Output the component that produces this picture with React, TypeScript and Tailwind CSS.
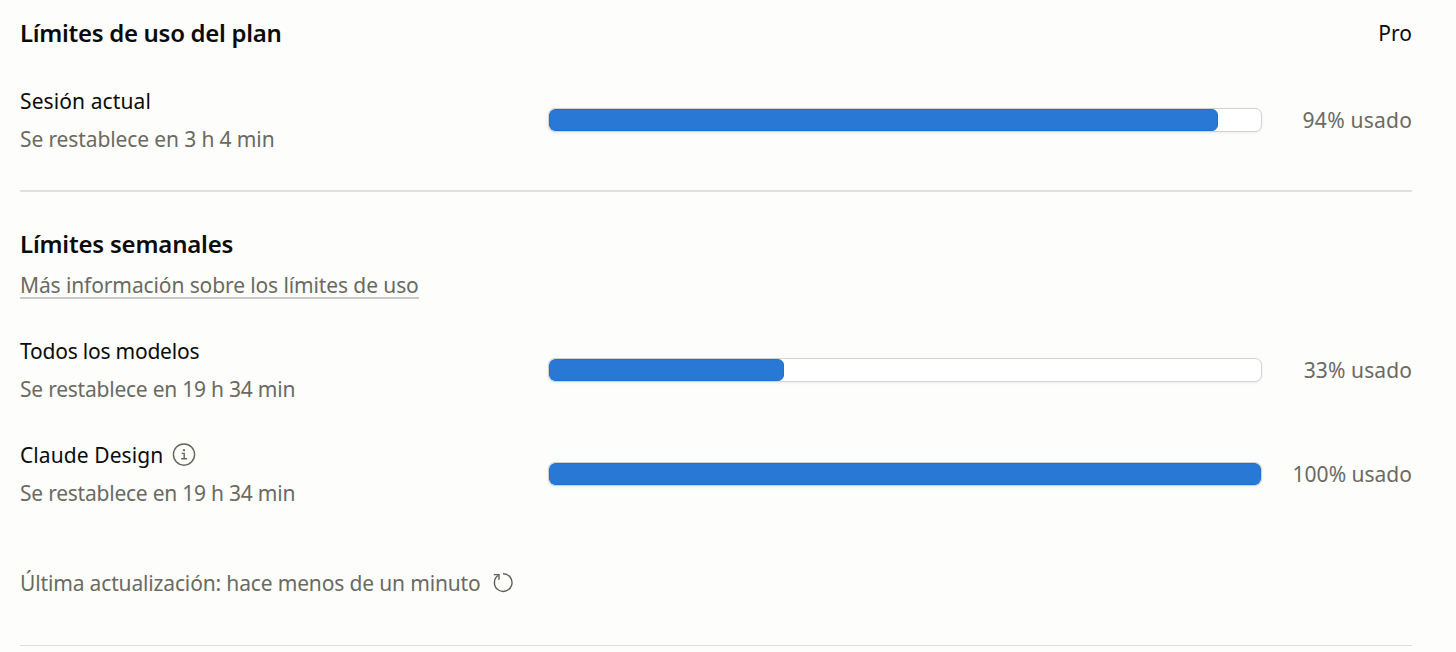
import React from "react";

function InfoIcon() {
  return (
    <svg className="h-6 w-6 shrink-0 text-[#65655f]" viewBox="0 0 24 24" fill="none" stroke="currentColor" strokeWidth="1.4">
      <circle cx="12" cy="11.6" r="10.6" />
      <path d="M9.6 10.4h2.6v5.2M9.2 15.7h6" />
      <circle cx="12" cy="7.2" r="1.1" fill="currentColor" stroke="none" />
    </svg>
  );
}

function RefreshIcon() {
  return (
    <svg className="h-6 w-6 shrink-0 text-[#5f5f5a]" viewBox="0 0 24 24" fill="none" stroke="currentColor" strokeWidth="1.4">
      <path d="M12 2.8A8.8 8.8 0 1 1 7 4.5" />
      <path d="M2.8 3.6H8v5.2" />
    </svg>
  );
}

type RowProps = {
  label: string;
  labelClass: string;
  reset: string;
  resetClass: string;
  percent: number;
  usedClass: string;
  info?: boolean;
};

function UsageRow({ label, labelClass, reset, resetClass, percent, usedClass, info }: RowProps) {
  return (
    <div className="flex h-[76px] items-center">
      <div className="w-[528px] shrink-0 leading-[38.5px] whitespace-nowrap">
        <div className="flex items-center gap-[9px] text-[#0b0b0b]">
          <span className={labelClass}>{label}</span>
          {info && <InfoIcon />}
        </div>
        <div className="text-[#6a6a63]">
          <span className={resetClass}>{reset}</span>
        </div>
      </div>
      <div className="h-6 w-[714px] shrink-0 overflow-hidden rounded-[7px] border border-[#d3d3d1] bg-white shadow-[0_1px_3px_rgba(0,0,0,0.07)]">
        <div className="h-full rounded-[6px] border border-[#2070d3] bg-[#2a78d6]" style={{ width: `${percent}%` }} />
      </div>
      <div className="flex-1 text-right whitespace-nowrap text-[#6a6a63]">
        <span className={usedClass}>{percent}% usado</span>
      </div>
    </div>
  );
}

export default function App() {
  return (
    <main className="h-[652px] w-full overflow-hidden bg-[#fdfdfb] pt-[17px] pr-11 pl-5 font-['Noto_Sans',sans-serif] text-[21px] leading-[38px]">
      <header className="flex h-8 items-center justify-between">
        <h2 className="text-[24px] font-semibold tracking-[-0.3px] whitespace-nowrap text-[#0b0b0b]">Límites de uso del plan</h2>
        <span className="text-[#0b0b0b]">Pro</span>
      </header>
      <section className="mt-[33px]">
        <UsageRow
          label="Sesión actual"
          labelClass="tracking-[0.1px]"
          reset="Se restablece en 3 h 4 min"
          resetClass="tracking-[-0.12px]"
          percent={94}
          usedClass="-mr-[0.25px] tracking-[0.25px]"
        />
      </section>
      <hr className="mt-8 border-t-2 border-[#e0e0df]" />
      <section className="mt-9">
        <h2 className="h-8 text-[24px] leading-8 font-semibold tracking-[-0.2px] text-[#0b0b0b]">Límites semanales</h2>
        <div className="mt-[7px] flex h-[38px] items-center">
          <a
            href="#"
            className="h-[26px] border-b-2 border-[#c9c9c6] leading-[24px] tracking-[-0.11px] whitespace-nowrap text-[#6a6a63]"
          >
            Más información sobre los límites de uso
          </a>
        </div>
        <div className="mt-[27px] flex flex-col gap-7">
          <UsageRow
            label="Todos los modelos"
            labelClass="tracking-[-0.22px]"
            reset="Se restablece en 19 h 34 min"
            resetClass="tracking-[-0.23px]"
            percent={33}
            usedClass="tracking-[0.1px]"
          />
          <UsageRow
            label="Claude Design"
            labelClass="tracking-[0.08px]"
            reset="Se restablece en 19 h 34 min"
            resetClass="tracking-[-0.23px]"
            percent={100}
            usedClass=""
            info
          />
        </div>
      </section>
      <footer className="mt-[52px] flex h-[38px] items-center gap-[10px] whitespace-nowrap text-[#6a6a63]">
        <span className="tracking-[-0.15px]">Última actualización: hace menos de un minuto</span>
        <RefreshIcon />
      </footer>
      <hr className="mt-[43px] border-t border-[#dededc]" />
    </main>
  );
}
